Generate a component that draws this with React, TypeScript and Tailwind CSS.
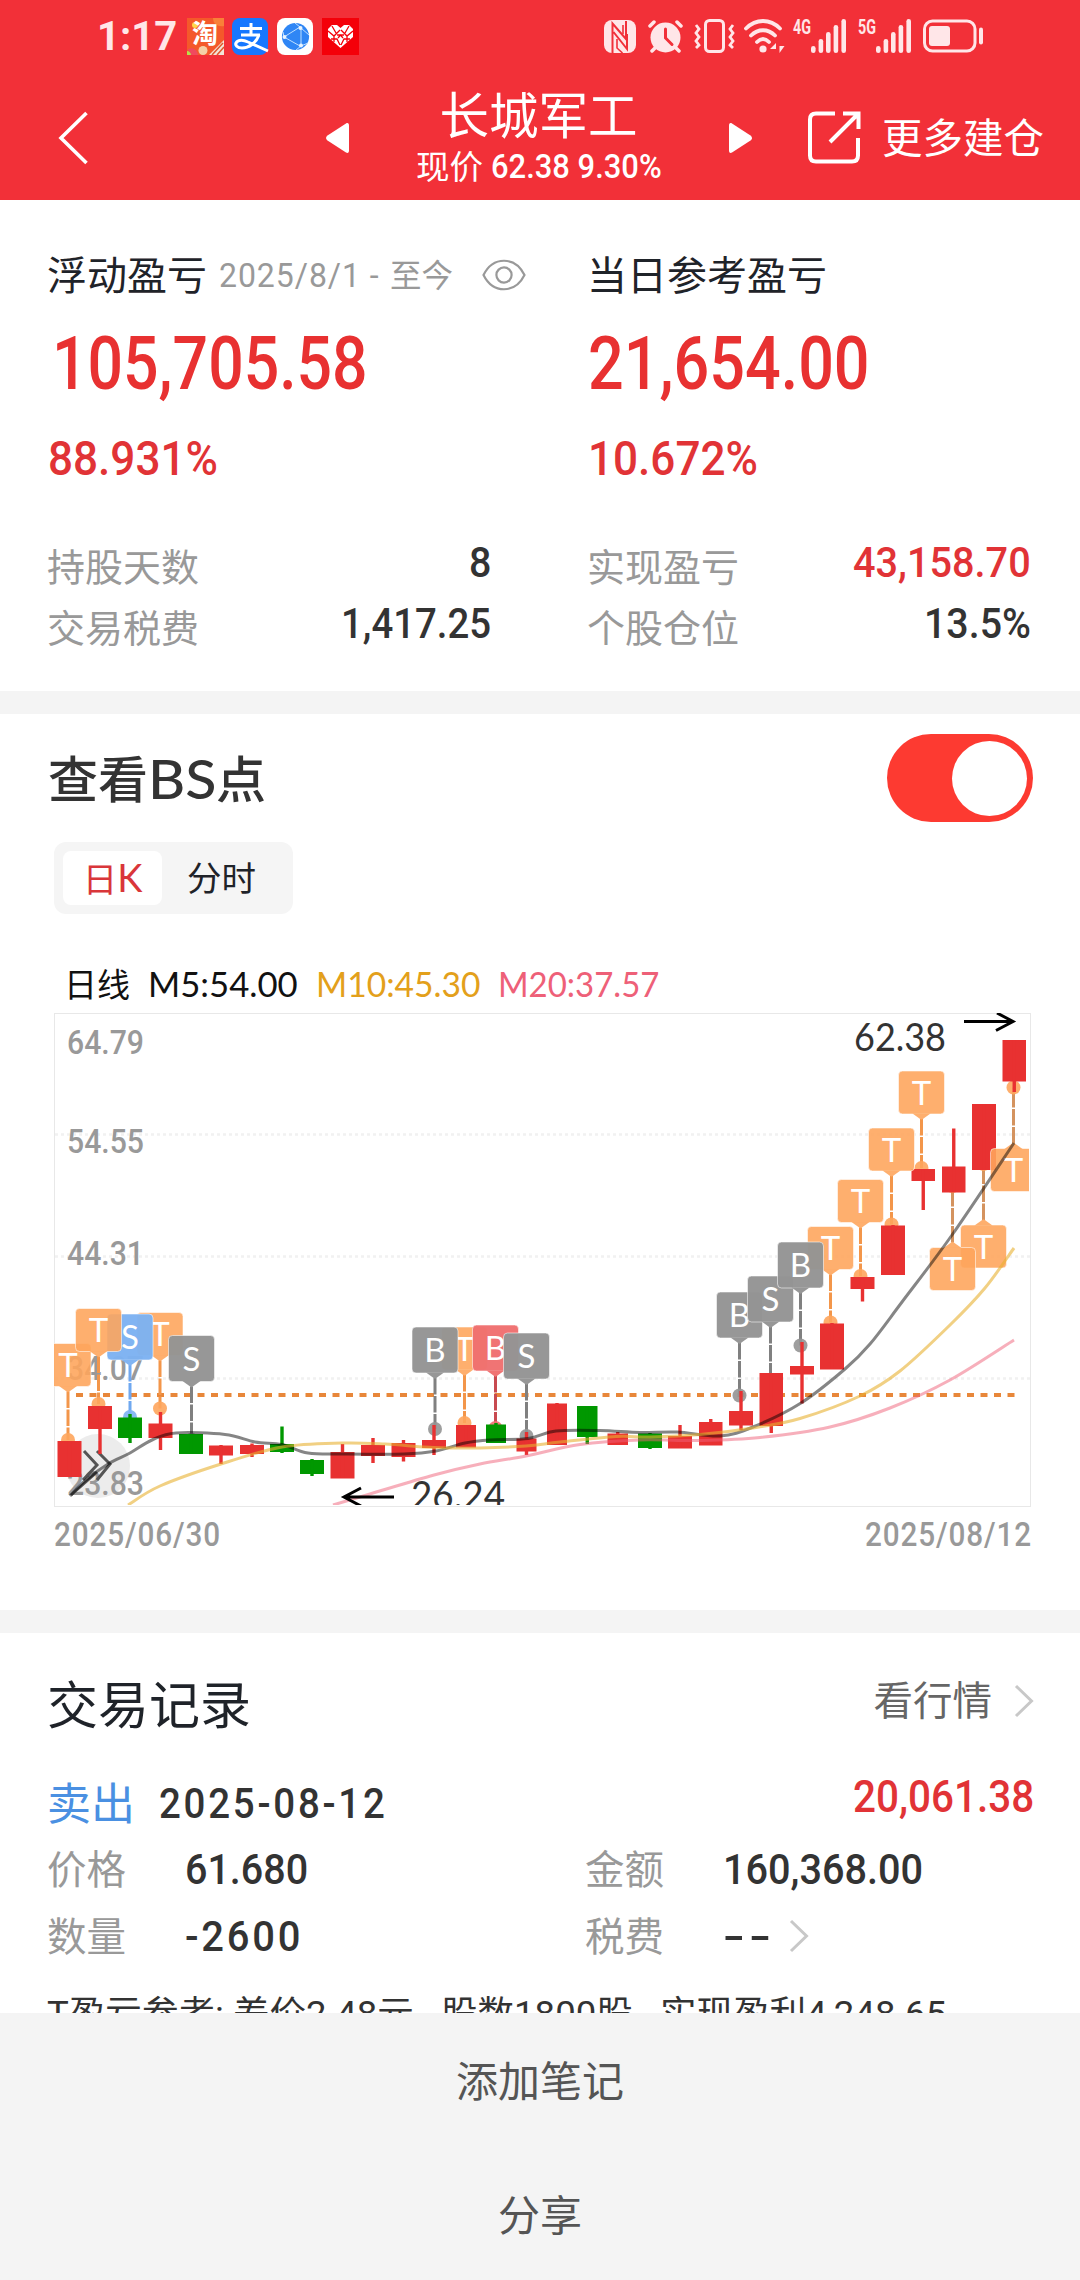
import { useLayoutEffect, useRef, useState, type ReactNode } from "react";

type FitProps = { w: number; className?: string; children: ReactNode };

// Squeezes (or stretches) a line of text to a fixed width, DIN-style
function Fit({ w, className = "", children }: FitProps) {
  const ref = useRef<HTMLSpanElement>(null);
  const [scale, setScale] = useState(1);

  useLayoutEffect(() => {
    if (ref.current) setScale(w / ref.current.offsetWidth);
  }, [w]);

  return (
    <span className="flex shrink-0 justify-start" style={{ width: w }}>
      <span
        ref={ref}
        className={`inline-block shrink-0 origin-left whitespace-pre font-[Roboto,'Noto_Sans_CJK_SC',sans-serif] leading-none ${className}`}
        style={{ transform: `scaleX(${scale})` }}
      >
        {children}
      </span>
    </span>
  );
}

/* ---------- status bar ---------- */

function Signal({ label }: { label: string }) {
  return (
    <svg className="overflow-visible" width="54" height="34" viewBox="0 0 54 34" fill="#ffe6e8">
      <text x="0" y="15" fontSize="20" fontWeight="700" fontFamily="Roboto" textLength="18" lengthAdjust="spacingAndGlyphs">
        {label}
      </text>
      <rect x="18" y="27" width="4.6" height="7" rx="2.3" />
      <rect x="25.6" y="20" width="4.6" height="14" rx="2.3" />
      <rect x="33" y="13" width="4.6" height="21" rx="2.3" />
      <rect x="40.6" y="6" width="4.6" height="28" rx="2.3" />
      <rect x="48.4" y="0" width="4.6" height="34" rx="2.3" />
    </svg>
  );
}

function StatusBar() {
  return (
    <div className="flex h-[72px] items-center pl-[97px] text-[#ffe6e8]">
      <Fit w={80} className="text-[41px] font-bold">1:17</Fit>
      <div className="ml-[10px] flex gap-[8px]">
        {/* Taobao */}
        <svg className="overflow-visible" width="37" height="37" viewBox="0 0 37 37">
          <rect width="37" height="37" fill="#f4592a" />
          <circle cx="8" cy="7" r="3" fill="#ffd84a" />
          <path d="M26 0h11v8c-6 1-11-2-11-8Z" fill="#f98038" />
          <path d="M22 37 37 22V37Z" fill="#f3e4d8" />
          <path d="m25 37 11-12M30 37l7-8" stroke="#e0562c" strokeWidth="1.5" />
          <text x="5" y="25" fontSize="26" fontWeight="700" fontFamily="Noto Sans CJK SC" fill="#fff">淘</text>
          <path d="M1 31c5-2 9 0 10 6H3Z" fill="#f04a5e" />
          <path d="M0 33c2 0 4 2 4 4H0Z" fill="#b7e04a" />
          <circle cx="16" cy="32.5" r="4.5" fill="#f4d0a8" />
        </svg>
        {/* Alipay */}
        <svg width="37" height="37" viewBox="0 0 37 37" fill="none" stroke="#fff" strokeWidth="3">
          <rect width="36" height="37" rx="8" fill="#1677ff" stroke="none" />
          <path d="M8 10.5h22M19 5v11M9 17h19M27 17c-3 8-10 13-17 13-5 0-7-3-6-5 2-4 8-3 12-1l20 9" />
        </svg>
        {/* Browser */}
        <svg width="37" height="37" viewBox="0 0 37 37">
          <rect width="36" height="37" rx="8" fill="#fff" />
          <circle cx="18.5" cy="18.5" r="13.6" fill="#2f86f5" />
          <path d="M7 19 23 9M7 19l16 9M24 10v18M23 9 18 5M24 10l8 7M24 28l7-3M24 28l-5 4M7 19l-1-5" stroke="#bfe0ff" strokeWidth="1" />
          <circle cx="7.5" cy="19" r="2" fill="#e8f4ff" />
          <circle cx="23.5" cy="10" r="2" fill="#e8f4ff" />
          <circle cx="24" cy="27.5" r="2" fill="#e8f4ff" />
        </svg>
        {/* Pinduoduo */}
        <svg width="37" height="37" viewBox="0 0 37 37">
          <rect width="37" height="37" fill="#f40009" />
          <path d="M18.5 30 6 19v-8l4-4h5l3.5 3L22 7h5l4 4v8Z" fill="#fff" />
          <path d="m6 13 6 5 6-6M31 13l-6 5-6-6M10 8l4 7M27 8l-4 7M9 21h6l3 6M28 21h-6l-3 6M15 17h7M16 20l2.500-3 2.500 3M12 18v6M25 18v6" stroke="#f40009" strokeWidth="1.3" fill="none" />
        </svg>
      </div>
      <div className="ml-auto flex items-center pr-[95px]">
        {/* NFC */}
        <svg width="32" height="33" viewBox="0 0 32 33">
          <rect width="32" height="33" rx="8" fill="#ffe6e8" />
          <path d="M8.500 33V3.500L22 19V1M9.500 12 23 29V14" fill="none" stroke="#f13039" strokeWidth="2" />
          <path d="M13 19v9l5.500 5M19 5v9" fill="none" stroke="#f13039" strokeWidth="1.6" />
        </svg>
        {/* Alarm */}
        <svg className="ml-[12px]" width="35" height="33" viewBox="0 0 35 33" fill="none" stroke="#ffe6e8" strokeWidth="3.5" strokeLinecap="round">
          <circle cx="17.5" cy="17.5" r="15" fill="#ffe6e8" stroke="none" />
          <path d="m2 6 4-4M33 6l-4-4M7 28l-3 3M28 28l3 3" />
          <path d="M17.500 9v9l6.500 6.500" stroke="#f13039" strokeWidth="3" />
        </svg>
        {/* Vibrate */}
        <svg className="ml-[11px]" width="41" height="34" viewBox="0 0 41 34" fill="none" stroke="#ffe6e8" strokeWidth="3">
          <rect x="11.5" y="1.5" width="18" height="31" rx="4" />
          <path d="m2 6 3 4-3 4 3 4-3 4 3 4-3 3M39 6l-3 4 3 4-3 4 3 4-3 4 3 3" strokeWidth="2.8" />
        </svg>
        {/* Wi-Fi */}
        <svg className="ml-[9px]" width="41" height="34" viewBox="0 0 41 34" fill="none" stroke="#ffe6e8" strokeWidth="3.8" strokeLinecap="round">
          <path d="M2 9.500C12-.5 26-.5 36 9.500M7 16.500c7-7 17-7 24 0M13 23c4-4 8-4 12 0" />
          <circle cx="19" cy="30" r="3.6" fill="#ffe6e8" stroke="none" />
          <path d="M26 30h6v-6ZM32 24v9M35.500 27v7l5-7Z" fill="#ffe6e8" stroke="none" />
        </svg>
        <div className="ml-[8px] flex gap-[11px]">
          <Signal label="4G" />
          <Signal label="5G" />
        </div>
        {/* Battery */}
        <svg className="ml-[11px]" width="62" height="34" viewBox="0 0 62 34" fill="none">
          <rect x="1.5" y="2" width="50.5" height="30" rx="8" stroke="#ffe6e8" strokeWidth="3" />
          <rect x="6" y="7" width="21" height="20" rx="3" fill="#ffe6e8" />
          <rect x="56" y="8.5" width="4" height="17" rx="2" fill="#ffe6e8" />
        </svg>
      </div>
    </div>
  );
}

/* ---------- header ---------- */

function Header() {
  return (
    <header className="h-[200px] bg-[#f23038] text-white">
      <StatusBar />
      <div className="flex h-[128px] items-center pt-[3px]">
        <svg className="ml-[58px]" width="30" height="54" viewBox="0 0 30 54" fill="none" stroke="#fff" strokeWidth="3.6">
          <path d="M28.500 2 3 27l25.500 25" />
        </svg>
        <svg className="ml-[238px]" width="23" height="30" viewBox="0 0 23 30" fill="#fff">
          <path d="M20 .5c2-1 3 0 3 2v25c0 2-1 3-3 2L1.500 17.500c-2-1.500-2-3.500 0-5Z" />
        </svg>
        <div className="flex w-[380px] flex-col items-center">
          <div className="h-[57px] pr-[1px] text-[49.5px] leading-[49px]">长城军工</div>
          <div className="flex h-[42px] items-center">
            <span className="mt-[-3px] text-[33.5px] leading-none">现价</span>
            <span className="ml-[8px] flex">
              <Fit w={171} className="text-[34px] font-medium">62.38 9.30%</Fit>
            </span>
          </div>
        </div>
        <svg width="23" height="30" viewBox="0 0 23 30" fill="#fff">
          <path d="M3 .5C1-.5 0 .5 0 2.500v25c0 2 1 3 3 2l18.500-12c2-1.500 2-3.500 0-5Z" />
        </svg>
        <svg className="ml-[56px]" width="53" height="53" viewBox="0 0 53 53" fill="none" stroke="#fff" strokeWidth="4">
          <path d="M27 2.500H8c-4 0-6 2-6 6v36c0 4 2 6 6 6h36c4 0 6-2 6-6V27" />
          <path d="M35 2.500h15.500V18M50 3 22 31" />
        </svg>
        <div className="mt-[-3px] ml-[21px] text-[40.5px] leading-none">更多建仓</div>
      </div>
    </header>
  );
}

/* ---------- summary ---------- */

function StatRow({ label, value, w, red }: { label: string; value: string; w: number; red?: boolean }) {
  return (
    <div className="flex h-[61px] items-center justify-between">
      <span className="ml-[-1px] text-[38px] leading-none text-[#999]">{label}</span>
      <span className={red ? "mt-[-5px] text-[#e13336]" : "mt-[-5px] text-[#333]"}>
        <Fit w={w} className="text-[43px] font-medium">{value}</Fit>
      </span>
    </div>
  );
}

function Summary() {
  return (
    <section className="grid h-[491px] grid-cols-[443px_443px] gap-x-[97px] pt-[45px] pl-[48px]">
      <div>
        <div className="flex h-[60px] w-[480px] items-center whitespace-nowrap text-[#999]">
          <span className="mt-[-4px] ml-[-1px] shrink-0 text-[40px] leading-none text-[#1f2329]">浮动盈亏</span>
          <span className="ml-[12px] flex shrink-0 items-center">
            <Fit w={161} className="text-[34px] tracking-[1px]">2025/8/1 -</Fit>
            <span className="mt-[-2px] ml-[10px] shrink-0 text-[31.5px] leading-none">至今</span>
          </span>
          <svg className="ml-[29px] shrink-0" width="44" height="32" viewBox="0 0 44 32" fill="none" stroke="#999" strokeWidth="2.2">
            <path d="M1.500 16C11-3 33-3 42.500 16 33 35 11 35 1.500 16Z" />
            <circle cx="22" cy="16" r="7.6" />
          </svg>
        </div>
        <div className="flex h-[118px] items-center pl-[4px] text-[#e83131]">
          <Fit w={316} className="text-[74px] font-medium">105,705.58</Fit>
        </div>
        <div className="flex h-[70px] items-center text-[#e13336]">
          <Fit w={170} className="text-[49px] font-medium">88.931%</Fit>
        </div>
        <div className="mt-[41px]">
          <StatRow label="持股天数" value="8" w={22} />
          <StatRow label="交易税费" value="1,417.25" w={150} />
        </div>
      </div>
      <div>
        <div className="flex h-[60px] items-center">
          <span className="mt-[-4px] ml-[-1px] text-[40px] leading-none text-[#1f2329]">当日参考盈亏</span>
        </div>
        <div className="flex h-[118px] items-center text-[#e83131]">
          <Fit w={282} className="text-[74px] font-medium">21,654.00</Fit>
        </div>
        <div className="flex h-[70px] items-center text-[#e13336]">
          <Fit w={170} className="text-[49px] font-medium">10.672%</Fit>
        </div>
        <div className="mt-[41px]">
          <StatRow label="实现盈亏" value="43,158.70" w={178} red />
          <StatRow label="个股仓位" value="13.5%" w={107} />
        </div>
      </div>
    </section>
  );
}

/* ---------- chart ---------- */

// [x, width, bodyTop, bodyBottom, wickTop, wickBottom, up]
const CANDLES: [number, number, number, number, number, number, 0 | 1][] = [
  [57.5, 24, 1441, 1477, 1441, 1477, 1],
  [88, 24, 1406, 1429, 1406, 1454, 1],
  [118, 24, 1417.5, 1438, 1414, 1443, 0],
  [148.5, 24, 1423.5, 1438, 1412, 1450, 1],
  [179, 24, 1434, 1454, 1434, 1454, 0],
  [209, 24, 1445.5, 1455.5, 1445, 1464, 1],
  [240, 24, 1445, 1454, 1443.5, 1457, 1],
  [270, 24, 1444, 1452, 1426.5, 1453, 0],
  [300, 24, 1460, 1474, 1459, 1476, 0],
  [330.5, 24, 1452, 1478.5, 1444, 1478, 1],
  [361, 24, 1445, 1456, 1438, 1463, 1],
  [391.5, 24, 1443, 1457, 1440, 1461.5, 1],
  [422, 24, 1440, 1448, 1425, 1455, 1],
  [456, 20, 1425, 1447.5, 1425, 1447, 1],
  [486, 20, 1424.5, 1443, 1423, 1443, 0],
  [516.5, 20, 1438.5, 1451.5, 1432, 1455, 1],
  [547, 20, 1403.5, 1445, 1403, 1445, 1],
  [577, 20.5, 1406, 1437, 1406, 1444, 0],
  [607.5, 20.5, 1433.5, 1445, 1432, 1445, 1],
  [638, 24, 1433.5, 1448, 1433, 1449, 0],
  [668, 24, 1436, 1448.5, 1425, 1448, 1],
  [699, 23.5, 1422, 1445.5, 1419, 1445, 1],
  [729, 24, 1411, 1425.5, 1391, 1430, 1],
  [759.5, 23.5, 1373, 1426, 1373, 1433, 1],
  [790, 24, 1366, 1374.5, 1342, 1403.5, 1],
  [820, 24, 1323.5, 1369.5, 1323, 1369, 1],
  [850.5, 24, 1277, 1289, 1277, 1301.5, 1],
  [881, 24, 1225.5, 1275, 1225, 1275, 1],
  [911.5, 23.5, 1169, 1181, 1169, 1210, 1],
  [942, 23.5, 1166.5, 1192.5, 1128.5, 1192, 1],
  [972, 24, 1104, 1170, 1104, 1170, 1],
  [1002.5, 23.5, 1040, 1081.5, 1040, 1092, 1],
];

const ORANGE = "#fea55c";
const GRAY = "#949494";

type Mark = { l: string; x: number; y: number; dot: number; c: string; stem: string; h?: number; below?: boolean };

const MARKS: Mark[] = [
  { l: "T", x: 68, y: 1343.5, dot: 1440, c: ORANGE, stem: "#f3964a" },
  { l: "T", x: 160, y: 1312.5, dot: 1408.5, c: ORANGE, stem: "#f3964a" },
  { l: "S", x: 130, y: 1314, dot: 1417, c: "#7db2f2", stem: "#6fa8f0", h: 46 },
  { l: "T", x: 98.5, y: 1308.5, dot: 1404, c: ORANGE, stem: "#f3964a" },
  { l: "S", x: 191.5, y: 1335.5, dot: 1440, c: GRAY, stem: "#808080", h: 46 },
  { l: "T", x: 464.5, y: 1327, dot: 1423, c: ORANGE, stem: "#f3964a" },
  { l: "B", x: 435, y: 1327, dot: 1429, c: GRAY, stem: "#808080", h: 46 },
  { l: "B", x: 495.5, y: 1325, dot: 1428, c: "#f07070", stem: "#c84a50", h: 46 },
  { l: "S", x: 526.5, y: 1333, dot: 1436, c: GRAY, stem: "#808080", h: 46 },
  { l: "B", x: 739.5, y: 1292, dot: 1395.5, c: GRAY, stem: "#808080", h: 46 },
  { l: "S", x: 770.5, y: 1276, dot: 1380, c: GRAY, stem: "#808080", h: 46 },
  { l: "T", x: 830.5, y: 1226.5, dot: 1322.5, c: ORANGE, stem: "#f3964a" },
  { l: "B", x: 800.5, y: 1242, dot: 1345.5, c: GRAY, stem: "#808080", h: 46 },
  { l: "T", x: 860.5, y: 1179.5, dot: 1276, c: ORANGE, stem: "#f3964a" },
  { l: "T", x: 891.5, y: 1128, dot: 1224.5, c: ORANGE, stem: "#f3964a" },
  { l: "T", x: 921.5, y: 1071, dot: 1168, c: ORANGE, stem: "#f3964a" },
  { l: "T", x: 983.5, y: 1225, dot: 1164, c: ORANGE, stem: "#d4935f", below: true },
  { l: "T", x: 952.5, y: 1247.5, dot: 1186, c: ORANGE, stem: "#d4935f", below: true },
  { l: "T", x: 1013.5, y: 1148.5, dot: 1087.5, c: ORANGE, stem: "#d4935f", below: true },
];

function Marker({ l, x, y, c, h = 43, below }: Mark) {
  const tip = below
    ? `M${x - 9} ${y + 0.5} L${x} ${y - 6} L${x + 9} ${y + 0.5}Z`
    : `M${x - 9} ${y + h - 0.5} L${x} ${y + h + 6} L${x + 9} ${y + h - 0.5}Z`;
  const opacity = c === ORANGE ? 0.89 : 0.97;
  return (
    <g>
      <rect x={x - 23} y={y} width={46} height={h} rx={4} fill={c} fillOpacity={opacity} stroke="#fff" strokeOpacity={0.55} />
      <path d={tip} fill={c} fillOpacity={opacity} />
      <text x={x} y={y + h / 2 + 12} textAnchor="middle" fontSize={33} fontFamily="Lato" fill="#fff">
        {l}
      </text>
    </g>
  );
}

const Y_LABELS: [string, number][] = [
  ["64.79", 1054],
  ["54.55", 1153],
  ["44.31", 1265],
  ["34.07", 1380],
  ["23.83", 1495],
];

// Catmull-Rom through the points, as cubic segments
function smooth(p: [number, number][]) {
  let d = `M${p[0][0]} ${p[0][1]}`;
  for (let i = 0; i < p.length - 1; i++) {
    const a = p[i - 1] ?? p[i];
    const b = p[i];
    const c = p[i + 1];
    const e = p[i + 2] ?? c;
    d += ` C${b[0] + (c[0] - a[0]) / 6} ${b[1] + (c[1] - a[1]) / 6} ${c[0] - (e[0] - b[0]) / 6} ${c[1] - (e[1] - b[1]) / 6} ${c[0]} ${c[1]}`;
  }
  return d;
}

const MA5: [number, number][] = [
  [70, 1496], [86, 1480], [108, 1464], [130, 1453], [152, 1440], [176, 1433], [225, 1434.5], [255, 1442], [282, 1444.5],
  [308, 1453], [345, 1454], [404, 1454], [436, 1451], [465, 1443], [490, 1440], [528, 1438.5], [556, 1431], [600, 1430.5],
  [640, 1432.5], [677, 1432], [720, 1436], [753, 1427], [801, 1403], [845, 1369], [870, 1344], [902, 1302], [952, 1235], [1014, 1143],
];
const MA10: [number, number][] = [
  [128, 1505], [160, 1486], [221, 1464], [282, 1447], [342, 1443], [385, 1444], [434, 1447.5], [480, 1448], [526, 1446],
  [560, 1442], [616, 1436.5], [650, 1437], [700, 1434.5], [753, 1428], [800, 1418.5], [860, 1396], [900, 1371], [950, 1325], [985, 1288], [1014, 1248],
];
const MA20: [number, number][] = [
  [333, 1505], [370, 1494], [434, 1475], [480, 1464], [526, 1456], [580, 1444.5], [640, 1440], [700, 1440.5], [760, 1437.5],
  [830, 1427], [890, 1408], [950, 1380], [1014, 1340],
];

function Chart() {
  return (
    <svg className="mt-[3px] ml-[54px] block" width="978" height="495" viewBox="54 1013 978 495">
      <rect x="54.5" y="1013.5" width="976" height="493" fill="#fff" stroke="#e8e8e8" />
      <clipPath id="plot">
        <rect x="54" y="1013" width="975" height="492" />
      </clipPath>
      <path d="M55 1134.500H1030M55 1256.500H1030M55 1378.500H1030" stroke="#f1f1f1" strokeWidth="2.5" strokeDasharray="3 3" />
      <circle cx="98" cy="1466" r="32" fill="#ececec" />
      <g fontFamily="Roboto" fontSize="34" fontWeight="500" fill="#999">
        {Y_LABELS.map(([t, y]) => (
          <text key={t} x="67" y={y} textLength="77" lengthAdjust="spacingAndGlyphs">{t}</text>
        ))}
      </g>

      <g clipPath="url(#plot)">
        <path d="m84 1451 13 14-14 15M97 1451l13 13-13 16M71 1495l26-23" fill="none" stroke="#555" strokeWidth="3" />
        <path d="M76 1395H1015" stroke="#e8873a" strokeWidth="4" strokeDasharray="7 6.5" />
        {MARKS.map((m) => (
          <g key={m.l + m.x}>
            <path
              d={m.below ? `M${m.x} ${m.y - 5}V${m.dot}` : `M${m.x} ${m.y + (m.h ?? 43) + 5}V${m.dot}`}
              stroke={m.stem}
              strokeWidth="3"
              strokeDasharray="16.5 1.5"
            />
            <circle cx={m.x} cy={m.dot} r="7" fill={m.c} fillOpacity="0.9" />
          </g>
        ))}
        {CANDLES.map(([x, w, t, b, wt, wb, up]) => (
          <g key={x} fill={up ? "#e83131" : "#009800"}>
            <rect x={x} y={t} width={w} height={b - t} />
            <rect x={x + w / 2 - 1.7} y={wt} width={3.4} height={wb - wt} />
          </g>
        ))}
        {MARKS.map((m) => (
          <Marker key={m.l + m.x} {...m} />
        ))}
        <g fill="none" strokeWidth="3">
          <path d={smooth(MA5)} stroke="#000" strokeOpacity="0.48" />
          <path d={smooth(MA10)} stroke="#e8b030" strokeOpacity="0.6" />
          <path d={smooth(MA20)} stroke="#f06078" strokeOpacity="0.5" />
        </g>
        <g fill="none" stroke="#000" strokeWidth="3">
          <path d="M345 1497H394M361 1488l-17 9 17 9" />
          <path d="M964 1021.500H1012M997 1013l16 8.500-17 9" />
        </g>
        <g fontFamily="Lato" fontSize="39" fill="#333">
          <text x="411" y="1508.5" textLength="94" lengthAdjust="spacingAndGlyphs">26.24</text>
          <text x="854" y="1051" textLength="92" lengthAdjust="spacingAndGlyphs">62.38</text>
        </g>
      </g>
    </svg>
  );
}

function BsSection() {
  return (
    <section className="h-[896px]">
      <div className="flex h-[128px] items-center justify-between pr-[47px] pl-[48px]">
        <div className="mt-[-5px] flex items-center text-[50px] leading-none font-medium text-[#333]">
          查看
          <Fit w={68} className="mt-[7px] text-[54px] font-medium font-[Lato]!">BS</Fit>
          点
        </div>
        <div className="flex h-[88px] w-[146px] items-center justify-end rounded-full bg-[#fd3a31] pr-[6px]">
          <div className="size-[75px] rounded-full bg-white" />
        </div>
      </div>
      <div className="ml-[54px] flex h-[72px] w-[239px] items-center rounded-[12px] bg-[#f5f5f5] pl-[9px] text-[34.5px] leading-none">
        <div className="flex h-[54px] w-[99px] items-center justify-center rounded-[8px] bg-white pb-[2px] text-[#d9363a]">
          日<span className="text-[38px] font-[Lato]">K</span>
        </div>
        <div className="ml-[25px] pb-[3px] text-[#1f2329]">分时</div>
      </div>
      <div className="mt-[44px] flex h-[52px] items-center pl-[64px]">
        <span className="mt-[-2px] text-[33px] leading-none text-[#111]">日线</span>
        <span className="ml-[18px] flex text-[#111]"><Fit w={150} className="text-[34px] font-[Lato]!">M5:54.00</Fit></span>
        <span className="ml-[18px] flex text-[#e3a01b]"><Fit w={164} className="text-[34px] font-[Lato]!">M10:45.30</Fit></span>
        <span className="ml-[18px] flex text-[#ee6078]"><Fit w={161} className="text-[34px] font-[Lato]!">M20:37.57</Fit></span>
      </div>
      <Chart />
      <div className="flex h-[52px] items-center justify-between pr-[48px] pl-[54px] text-[#999]">
        <Fit w={167} className="text-[34px] font-medium tracking-[1px]">2025/06/30</Fit>
        <Fit w={167} className="text-[34px] font-medium tracking-[1px]">2025/08/12</Fit>
      </div>
    </section>
  );
}

/* ---------- trades ---------- */

function Chevron() {
  return (
    <svg width="20" height="34" viewBox="0 0 20 34" fill="none" stroke="#c8c8c8" strokeWidth="3">
      <path d="m2 2 15.500 15L2 32" />
    </svg>
  );
}

function Field({ label, children }: { label: string; children: ReactNode }) {
  return (
    <div className="flex w-[538px] shrink-0 items-center">
      <span className="mt-[-5px] w-[138px] text-[39.5px] leading-none text-[#999]">{label}</span>
      <span className="flex items-center text-[#333]">{children}</span>
    </div>
  );
}

function Trades() {
  return (
    <section className="h-[380px] overflow-hidden pr-[46px] pl-[47px]">
      <div className="flex h-[146px] items-center justify-between">
        <span className="mt-[-7px] text-[51px] leading-none text-[#1f2329]">交易记录</span>
        <span className="mt-[-11px] flex items-center gap-[22px] text-[39.5px] leading-none text-[#666]">
          <span className="mt-[-5px]">看行情</span>
          <Chevron />
        </span>
      </div>
      <div className="flex h-[46px] items-center">
        <span className="mt-[-3px] text-[44px] leading-none text-[#4a90e2]">卖出</span>
        <span className="mt-[4px] ml-[24px] flex text-[#333]">
          <Fit w={229} className="text-[42px] font-medium tracking-[3px]">2025-08-12</Fit>
        </span>
        <span className="mt-[-10px] ml-auto flex text-[#e13336]">
          <Fit w={181} className="text-[44px] font-medium">20,061.38</Fit>
        </span>
      </div>
      <div className="flex h-[88px] items-center">
        <Field label="价格"><Fit w={123} className="text-[43px] font-medium">61.680</Fit></Field>
        <Field label="金额"><Fit w={200} className="text-[43px] font-medium">160,368.00</Fit></Field>
      </div>
      <div className="flex h-[46px] items-center">
        <Field label="数量"><Fit w={118} className="text-[43px] font-medium tracking-[3px]">-2600</Fit></Field>
        <Field label="税费">
          <span className="mr-[14px]"><Fit w={52} className="text-[43px] font-medium tracking-[3px]">--</Fit></span>
          <Chevron />
        </Field>
      </div>
      <div className="flex h-[110px] items-center text-[#333]">
        <Fit w={899} className="text-[35px]">{"T盈亏参考: 差价2.48元   股数1800股   实现盈利4,248.65"}</Fit>
      </div>
    </section>
  );
}

export default function App() {
  return (
    <div className="h-[2280px] w-[1080px] overflow-hidden bg-white font-['Noto_Sans_CJK_SC',sans-serif]">
      <Header />
      <Summary />
      <div className="h-[23px] bg-[#f4f4f4]" />
      <BsSection />
      <div className="h-[23px] bg-[#f4f4f4]" />
      <Trades />
      <footer className="flex h-[267px] flex-col bg-[#f4f4f4] text-[42px] leading-none text-[#555]">
        <button className="h-[132px]">添加笔记</button>
        <button className="h-[135px]">分享</button>
      </footer>
    </div>
  );
}
